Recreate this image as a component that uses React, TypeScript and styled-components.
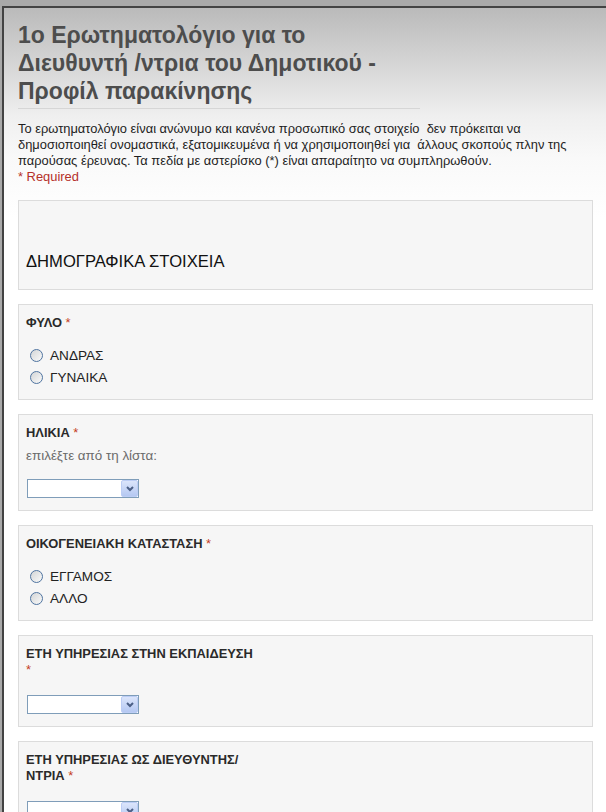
import React from 'react'
import styled, { createGlobalStyle } from 'styled-components'

const GlobalStyle = createGlobalStyle`
  html, body {
    margin: 0;
    padding: 0;
    background: #a9a9a9;
  }
  body {
    font-family: "Liberation Sans", Arial, sans-serif;
    font-size: 12.6px;
    color: #222;
  }
`

const Frame = styled.div`
  margin: 6px 0 0 2px;
  min-height: 804px;
  border-top: 2px solid #434343;
  border-left: 2px solid #434343;
  padding: 13px 13px 0 14px;
  background: linear-gradient(#bababa 0, #efefef 108px, #f9f9f9 150px, #fff 210px);
`

const Title = styled.h1`
  margin: 0;
  width: 402px;
  padding-bottom: 3px;
  border-bottom: 1px solid #d6d6d6;
  font-size: 23px;
  line-height: 28px;
  font-weight: bold;
  color: #4d4d4d;
`

const Intro = styled.div`
  margin-top: 12px;
  width: 575px;
  font-size: 12.9px;
  line-height: 16px;
  color: #1e1e1e;
`

const Required = styled.div`
  color: #b5302a;
`

const Section = styled.div<{ $header?: boolean; $bottom?: number }>`
  margin-top: 14px;
  width: 575px;
  box-sizing: border-box;
  border: 1px solid #dcdcdc;
  background: #f6f6f6;
  padding: ${({ $header, $bottom = 11 }) => ($header ? '53px 7px 19px' : `10px 7px ${$bottom}px`)};
`

const FirstSection = styled(Section)`
  margin-top: 15px;
`

const Heading = styled.div`
  font-size: 16.6px;
  line-height: 16px;
  color: #111;
`

const Label = styled.div`
  font-weight: bold;
  font-size: 12.9px;
  line-height: 16px;
  color: #2a2a2a;
`

const Star = styled.span`
  color: #c43b1d;
  font-weight: normal;
`

const Help = styled.div`
  margin-top: 7px;
  font-size: 13.4px;
  line-height: 16px;
  color: #6b6b6b;
`

const RadioList = styled.div`
  margin-top: 13px;
  display: flex;
  flex-direction: column;
`

const RadioRow = styled.label`
  display: flex;
  align-items: center;
  height: 22px;
  font-size: 13.6px;
  color: #222;
`

const Radio = styled.input.attrs({ type: 'radio' })`
  appearance: none;
  margin: 0 7px 0 4px;
  width: 13px;
  height: 13px;
  border-radius: 50%;
  border: 1px solid #4f74a0;
  background: linear-gradient(135deg, #d3d5d6, #fafafa);
  box-sizing: border-box;
`

const SelectWrap = styled.div<{ $gap: number }>`
  position: relative;
  margin: ${({ $gap }) => $gap}px 0 0 1px;
  width: 112px;
  height: 19px;
`

const Select = styled.select`
  appearance: none;
  width: 100%;
  height: 100%;
  margin: 0;
  box-sizing: border-box;
  border: 1px solid #7f9db9;
  border-radius: 0;
  background: #fff;
  font: inherit;
`

const DropButton = styled.span`
  position: absolute;
  top: 1px;
  right: 1px;
  width: 17px;
  height: 17px;
  box-sizing: border-box;
  border: 1px solid #bccdf5;
  border-radius: 2px;
  background: linear-gradient(#dbe5fb, #b5c8f2);
  display: flex;
  align-items: center;
  justify-content: center;
  pointer-events: none;
`

const Chevron = () => (
  <svg width="8" height="6" viewBox="0 0 8 6">
    <path d="M1 1 L4 4 L7 1" fill="none" stroke="#4b5f86" strokeWidth="2" />
  </svg>
)

const Dropdown: React.FC<{ gap: number }> = ({ gap }) => (
  <SelectWrap $gap={gap}>
    <Select defaultValue="">
      <option value="" />
    </Select>
    <DropButton>
      <Chevron />
    </DropButton>
  </SelectWrap>
)

const RadioGroup: React.FC<{ name: string; options: string[] }> = ({ name, options }) => (
  <RadioList>
    {options.map(o => (
      <RadioRow key={o}>
        <Radio name={name} value={o} />
        {o}
      </RadioRow>
    ))}
  </RadioList>
)

const App: React.FC = () => (
  <>
    <GlobalStyle />
    <Frame>
      <Title>
        1o Ερωτηματολόγιο για το
        <br />
        Διευθυντή /ντρια του Δημοτικού -
        <br />
        Προφίλ παρακίνησης
      </Title>
      <Intro>
        Το ερωτηματολόγιο είναι ανώνυμο και κανένα προσωπικό σας στοιχείο&nbsp; δεν πρόκειται να
        <br />
        δημοσιοποιηθεί ονομαστικά, εξατομικευμένα ή να χρησιμοποιηθεί για&nbsp; άλλους σκοπούς πλην της
        <br />
        παρούσας έρευνας. Τα πεδία με αστερίσκο (*) είναι απαραίτητο να συμπληρωθούν.
        <Required>* Required</Required>
      </Intro>

      <FirstSection $header>
        <Heading>ΔΗΜΟΓΡΑΦΙΚΑ ΣΤΟΙΧΕΙΑ</Heading>
      </FirstSection>

      <Section>
        <Label>
          ΦΥΛΟ <Star>*</Star>
        </Label>
        <RadioGroup name="sex" options={['ΑΝΔΡΑΣ', 'ΓΥΝΑΙΚΑ']} />
      </Section>

      <Section $bottom={12}>
        <Label>
          ΗΛΙΚΙΑ <Star>*</Star>
        </Label>
        <Help>επιλέξτε από τη λίστα:</Help>
        <Dropdown gap={15} />
      </Section>

      <Section>
        <Label>
          ΟΙΚΟΓΕΝΕΙΑΚΗ ΚΑΤΑΣΤΑΣΗ <Star>*</Star>
        </Label>
        <RadioGroup name="family" options={['ΕΓΓΑΜΟΣ', 'ΑΛΛΟ']} />
      </Section>

      <Section $bottom={12}>
        <Label>
          ΕΤΗ ΥΠΗΡΕΣΙΑΣ ΣΤΗΝ ΕΚΠΑΙΔΕΥΣΗ
          <br />
          <Star>*</Star>
        </Label>
        <Dropdown gap={17} />
      </Section>

      <Section $bottom={12}>
        <Label>
          ΕΤΗ ΥΠΗΡΕΣΙΑΣ ΩΣ ΔΙΕΥΘΥΝΤΗΣ/
          <br />
          ΝΤΡΙΑ <Star>*</Star>
        </Label>
        <Dropdown gap={17} />
      </Section>
    </Frame>
  </>
)

export default App
